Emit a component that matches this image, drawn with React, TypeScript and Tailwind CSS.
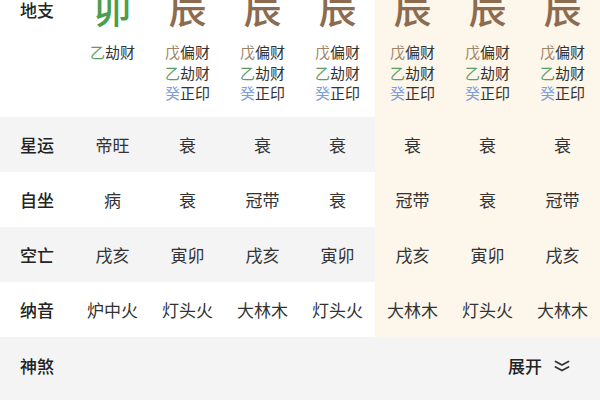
import React from "react";

const CREAM = "bg-[#fdf6ea]";

type Stem = { s: string; c: string; t: string };

const cols: { big: string; bigColor: string; stems: Stem[] }[] = [
  { big: "卯", bigColor: "text-[#4a9e4e]", stems: [{ s: "乙", c: "text-[#5e9d69]", t: "劫财" }] },
  ...Array.from({ length: 6 }, () => ({
    big: "辰",
    bigColor: "text-[#8c6b4f]",
    stems: [
      { s: "戊", c: "text-[#a08468]", t: "偏财" },
      { s: "乙", c: "text-[#5e9d69]", t: "劫财" },
      { s: "癸", c: "text-[#7b9ee0]", t: "正印" },
    ],
  })),
];

const rows: { label: string; vals: string[]; gray: boolean }[] = [
  { label: "星运", vals: ["帝旺", "衰", "衰", "衰", "衰", "衰", "衰"], gray: true },
  { label: "自坐", vals: ["病", "衰", "冠带", "衰", "冠带", "衰", "冠带"], gray: false },
  { label: "空亡", vals: ["戌亥", "寅卯", "戌亥", "寅卯", "戌亥", "寅卯", "戌亥"], gray: true },
  { label: "纳音", vals: ["炉中火", "灯头火", "大林木", "灯头火", "大林木", "灯头火", "大林木"], gray: false },
];

export default function App() {
  return (
    <div className="w-[600px] h-[400px] overflow-hidden bg-[#f4f4f4] text-[#2b2b2b] font-['Noto_Sans_CJK_SC','Noto_Sans',sans-serif]">
      {/* top section */}
      <div className="flex h-[117px] bg-white">
        <div className="w-[75px] flex flex-col pl-[20px]">
          <div className="-mt-[2px] text-[17px] leading-[24px] font-medium text-[#222]">地支</div>
        </div>
        {cols.map((c, i) => (
          <div key={i} className={`w-[75px] flex flex-col items-center ${i >= 4 ? CREAM : ""}`}>
            <div className={`-mt-[12px] h-[38px] text-[38px] leading-[38px] font-medium ${c.bigColor}`}>{c.big}</div>
            <div className="mt-[16px] flex flex-col text-[15px] leading-[20.5px]">
              {c.stems.map((st, j) => (
                <div key={j} className="text-[#333]">
                  <span className={st.c}>{st.s}</span>
                  {st.t}
                </div>
              ))}
            </div>
          </div>
        ))}
      </div>
      {rows.map((r, ri) => (
        <div key={ri} className={`flex h-[55px] ${r.gray ? "bg-[#f4f4f4]" : "bg-white"}`}>
          <div className="w-[75px] flex items-center pl-[20px] text-[17px] font-medium text-[#222]">{r.label}</div>
          {r.vals.map((v, i) => (
            <div
              key={i}
              className={`w-[75px] flex items-center justify-center text-[17px] text-[#333] ${i >= 4 ? CREAM : ""}`}
            >
              {v}
            </div>
          ))}
        </div>
      ))}
      <div className="flex h-[58px] items-center justify-between pl-[20px] pr-[30px] bg-[#f4f4f4]">
        <div className="text-[17px] font-medium text-[#222]">神煞</div>
        <div className="flex items-center gap-[12px]">
          <span className="text-[17px] font-medium text-[#222]">展开</span>
          <svg width="16" height="12" viewBox="0 0 16 12" fill="none" stroke="#333" strokeWidth="1.8" strokeLinecap="round" strokeLinejoin="round">
            <polyline points="1.5,1.5 8,5 14.5,1.5" />
            <polyline points="1.5,7 8,10.5 14.5,7" />
          </svg>
        </div>
      </div>
    </div>
  );
}
